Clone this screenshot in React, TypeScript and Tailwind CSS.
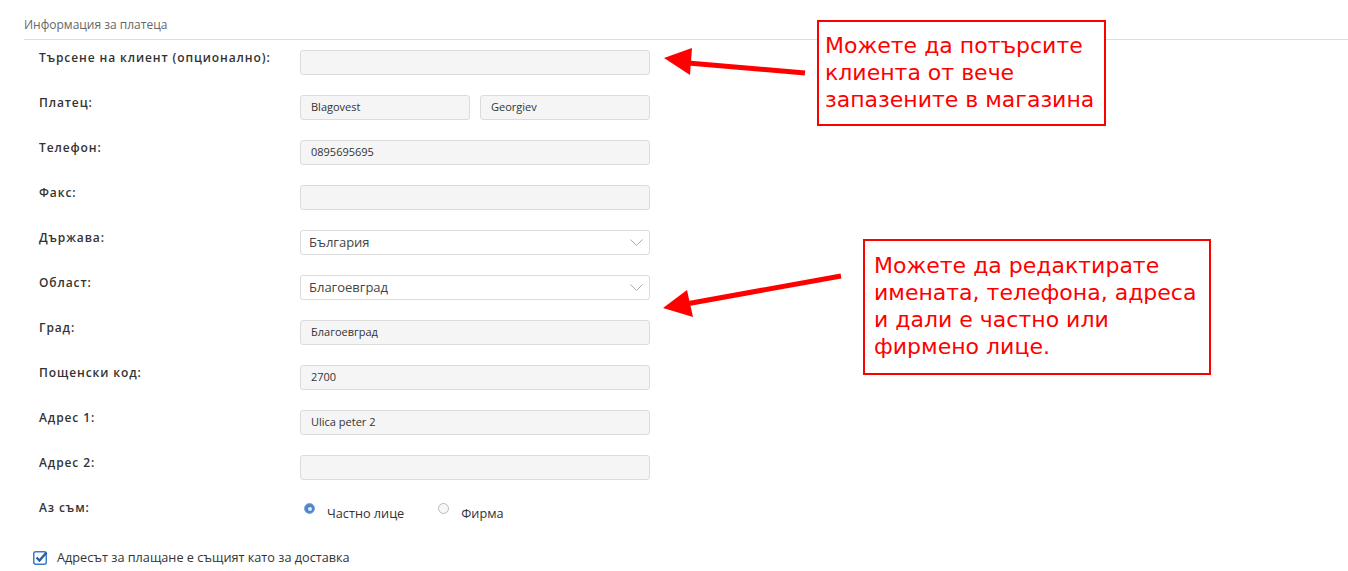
import React from 'react'

const font = { fontFamily: '"Open Sans", "Liberation Sans", sans-serif' }

// Simple text field, greyed like the shop admin inputs
function Field({ value = '', className = '' }: { value?: string; className?: string }) {
  return (
    <div className={`h-[25px] rounded-[3px] border border-[#dcdcdc] bg-[#f5f5f5] pl-[10px] flex items-center text-[11px] text-[#333] ${className}`}>
      {value}
    </div>
  )
}

function SelectBox({ value }: { value: string }) {
  return (
    <div className="h-[25px] w-[350px] rounded-[3px] border border-[#dcdcdc] bg-white pl-[8px] pr-[6px] flex items-center justify-between text-[13px] text-[#444]">
      <span>{value}</span>
      <svg width="13" height="8" viewBox="0 0 13 8" className="mt-[1px]">
        <path d="M0.5 0.5 L6.5 6.5 L12.5 0.5" fill="none" stroke="#aaa" strokeWidth="1" />
      </svg>
    </div>
  )
}

function Row({ label, children }: { label: string; children: React.ReactNode }) {
  return (
    <div className="flex items-start h-[25px]">
      <div className="w-[276px] pl-[15px] text-[12px] leading-[16px] font-semibold tracking-[0.9px] text-[#333]">{label}</div>
      <div className="flex gap-[10px]">{children}</div>
    </div>
  )
}

function Radio({ checked, label }: { checked?: boolean; label: string }) {
  return (
    <div className="flex items-start">
      <div className={`mt-[3px] w-[11px] h-[11px] rounded-full border flex items-center justify-center ${checked ? 'border-[#7ea6d8] bg-[#4d86cc]' : 'border-[#bbb] bg-[#f7f7f7]'}`}>
        {checked && <div className="w-[4px] h-[4px] rounded-full bg-[#dfeaf7]" />}
      </div>
      <span className="ml-[12px] mt-[5px] text-[12.7px] leading-[16px] text-[#333]">{label}</span>
    </div>
  )
}

function Note({ lines, className }: { lines: string[]; className: string }) {
  return (
    <div
      className={`absolute border-2 border-[#ff0000] bg-white text-[#ff0000] text-[22px] leading-[27px] ${className}`}
      style={{ fontFamily: '"DejaVu Sans", sans-serif' }}
    >
      {lines.map((l, i) => (
        <div key={i} className="whitespace-nowrap">{l}</div>
      ))}
    </div>
  )
}

export default function App() {
  return (
    <div className="relative w-[1348px] h-[571px] bg-white overflow-hidden" style={font}>
      <div className="pl-[24px]">
        <div className="pt-[16px] pb-[5px] text-[12px] leading-[18px] text-[#666] border-b border-[#dedede]">
          Информация за платеца
        </div>

        <div className="mt-[10px] flex flex-col gap-[20px]">
          <Row label="Търсене на клиент (опционално):">
            <Field className="w-[350px]" />
          </Row>
          <Row label="Платец:">
            <Field value="Blagovest" className="w-[170px]" />
            <Field value="Georgiev" className="w-[170px]" />
          </Row>
          <Row label="Телефон:">
            <Field value="0895695695" className="w-[350px]" />
          </Row>
          <Row label="Факс:">
            <Field className="w-[350px]" />
          </Row>
          <Row label="Държава:">
            <SelectBox value="България" />
          </Row>
          <Row label="Област:">
            <SelectBox value="Благоевград" />
          </Row>
          <Row label="Град:">
            <Field value="Благоевград" className="w-[350px]" />
          </Row>
          <Row label="Пощенски код:">
            <Field value="2700" className="w-[350px]" />
          </Row>
          <Row label="Адрес 1:">
            <Field value="Ulica peter 2" className="w-[350px]" />
          </Row>
          <Row label="Адрес 2:">
            <Field className="w-[350px]" />
          </Row>
          <Row label="Аз съм:">
            <div className="flex gap-[34px] ml-[4px]">
              <Radio checked label="Частно лице" />
              <Radio label="Фирма" />
            </div>
          </Row>
        </div>

        <div className="mt-[23px] ml-[9px] flex items-center">
          <svg width="15" height="15" viewBox="0 0 15 15">
            <rect x="0.75" y="1.75" width="12.5" height="12.5" rx="2" fill="#fff" stroke="#3a7bc8" strokeWidth="1.5" />
            <path d="M3.5 7.5 L6.5 10.5 L13.5 2.5" fill="none" stroke="#2d5f9c" strokeWidth="2.4" />
          </svg>
          <span className="ml-[9px] text-[12.7px] text-[#333]">Адресът за плащане е същият като за доставка</span>
        </div>
      </div>

      <Note
        className="left-[817px] top-[20px] w-[289px] h-[106px] pl-[6px] pt-[10px]"
        lines={['Можете да потърсите', 'клиента от вече', 'запазените в магазина']}
      />
      <Note
        className="left-[863px] top-[239px] w-[348px] h-[136px] pl-[9px] pt-[11px]"
        lines={['Можете да редактирате', 'имената, телефона, адреса', 'и дали е частно или', 'фирмено лице.']}
      />

      {/* annotation arrows */}
      <svg className="absolute left-0 top-0 pointer-events-none" width="1348" height="571">
        <line x1="805" y1="73" x2="688" y2="63" stroke="#ff0000" strokeWidth="5" />
        <polygon points="664,58 692,48 690,75" fill="#ff0000" />
        <line x1="841" y1="276" x2="686" y2="304" stroke="#ff0000" strokeWidth="5" />
        <polygon points="663,308 687,290 693,317" fill="#ff0000" />
      </svg>
    </div>
  )
}
